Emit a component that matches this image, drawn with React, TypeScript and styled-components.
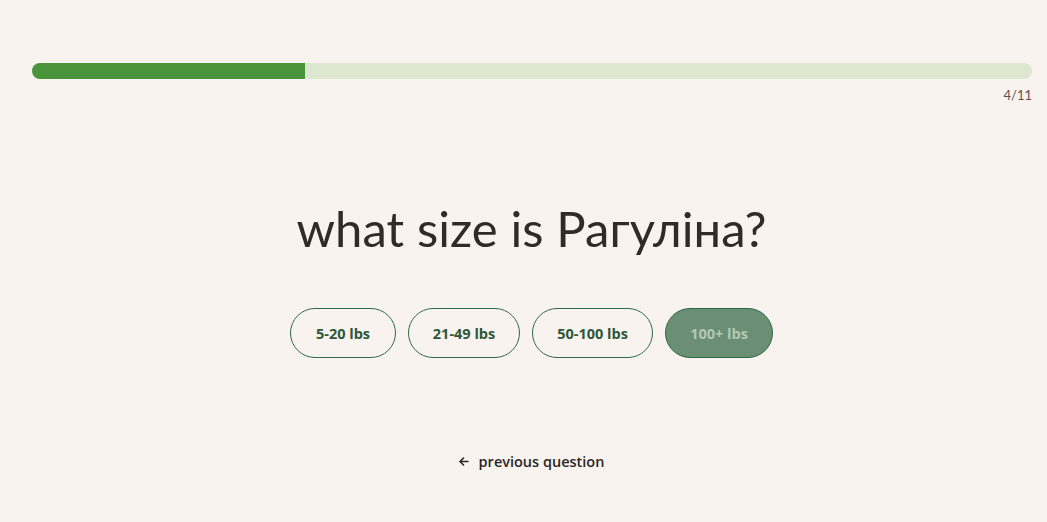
import React, { useState } from 'react';
import styled, { createGlobalStyle } from 'styled-components';

const GlobalStyle = createGlobalStyle`
  html, body {
    margin: 0;
    padding: 0;
    background: #f8f3ef;
  }
  * { box-sizing: border-box; }
`;

const Page = styled.div`
  display: flex;
  flex-direction: column;
  align-items: center;
  min-height: 522px;
  padding: 63px 15px 0 31px;
  font-family: 'Open Sans', 'Liberation Sans', sans-serif;
`;

const ProgressWrap = styled.div`
  width: 100%;
  display: flex;
  flex-direction: column;
  align-items: flex-end;
  padding-left: 1px;
`;

const Track = styled.div`
  width: 100%;
  height: 16px;
  border-radius: 8px;
  background: #dde6cf;
  overflow: hidden;
`;

const Fill = styled.div`
  height: 100%;
  background: #4a943c;
`;

const Counter = styled.div`
  margin-top: 8px;
  font-family: 'Lato', 'Liberation Sans', sans-serif;
  font-size: 13px;
  color: #5c5048;
`;

const Question = styled.h1`
  margin: 94px 0 0;
  font-family: 'Lato', 'Liberation Sans', sans-serif;
  font-weight: 400;
  font-size: 49px;
  line-height: 62px;
  letter-spacing: 0.1px;
  color: #322a26;
`;

const Options = styled.div`
  display: flex;
  gap: 12px;
  margin-top: 49px;
`;

const Option = styled.button<{ $active?: boolean; $w: number }>`
  width: ${p => p.$w}px;
  height: 50px;
  border-radius: 25px;
  border: 1px solid #2f6a45;
  background: ${p => (p.$active ? '#6a8f74' : 'transparent')};
  color: ${p => (p.$active ? '#b3c8b6' : '#2e573a')};
  font-family: 'Open Sans', 'Liberation Sans', sans-serif;
  font-weight: 700;
  font-size: 14.5px;
  cursor: pointer;
  padding: 0;
`;

const Back = styled.button`
  margin-top: 94px;
  display: flex;
  align-items: center;
  gap: 10px;
  background: none;
  border: none;
  padding: 0;
  font-family: 'Open Sans', 'Liberation Sans', sans-serif;
  font-weight: 600;
  font-size: 14.5px;
  color: #2a2624;
  cursor: pointer;
`;

const options = [
  { label: '5-20 lbs', w: 106 },
  { label: '21-49 lbs', w: 112 },
  { label: '50-100 lbs', w: 121 },
  { label: '100+ lbs', w: 108 },
];

export default function App() {
  const [selected, setSelected] = useState(3);
  const step = 4;
  const total = 11;

  return (
    <>
      <GlobalStyle />
      <Page>
        <ProgressWrap>
          <Track>
            <Fill style={{ width: `${((step - 1) / total) * 100}%` }} />
          </Track>
          <Counter>{step}/{total}</Counter>
        </ProgressWrap>
        <Question>what size is Рагуліна?</Question>
        <Options>
          {options.map((o, i) => (
            <Option key={o.label} $w={o.w} $active={i === selected} onClick={() => setSelected(i)}>
              {o.label}
            </Option>
          ))}
        </Options>
        <Back>
          <svg width="10" height="9" viewBox="0 0 10 9" fill="none">
            <path d="M9 4.5H1.5M4.5 1L1 4.5L4.5 8" stroke="#2a2624" strokeWidth="1.6" strokeLinecap="round" strokeLinejoin="round" />
          </svg>
          previous question
        </Back>
      </Page>
    </>
  );
}
